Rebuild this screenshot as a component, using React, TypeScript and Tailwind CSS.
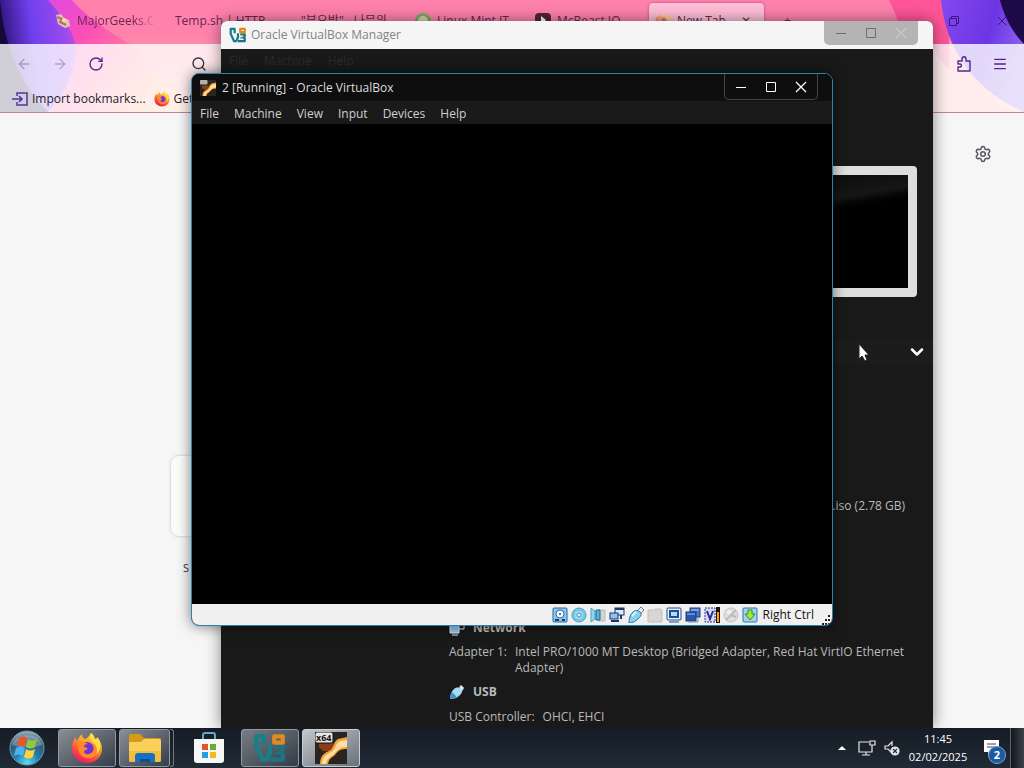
import { ReactNode, useId } from 'react'
import { ArrowLeft, ArrowRight, RotateCw, Search, Menu, Settings, ChevronDown } from 'lucide-react'

interface IChildren {
    children: ReactNode;
}

// ICONS: Applications
const FirefoxIcon = ({ className }: { className: string }) => {
    const id = useId();
    return (
        <svg viewBox="0 0 32 32" className={className} aria-hidden="true">
            <defs>
                <linearGradient id={id} x1="0.8" y1="0" x2="0.3" y2="1">
                    <stop offset="0" stopColor="#ffe14a" />
                    <stop offset="0.4" stopColor="#ff9a2b" />
                    <stop offset="0.7" stopColor="#ff4a3d" />
                    <stop offset="1" stopColor="#e31b6d" />
                </linearGradient>
            </defs>
            <path d="M20 1c2 2 3 4 3 6 2 0 3-1 3-2 3 3 5 8 5 12 0 8-7 14-15 14S1 25 1 17c0-5 1-9 4-12 0 2 0 3 1 4 1-3 3-5 5-7 0 3 1 4 3 5 3-1 4-3 6-6z" fill={`url(#${id})`} />
            <circle cx="16" cy="17" r="7" fill="#6d35d6" />
            <path d="M7 11c4-2 7-1 10 1-3 0-4 1-4 3 2 0 3 1 4 2-2 1-4 1-4 3 1 3 7 3 9-1 2-3 0-7-3-8 5 0 8 4 7 9-1 5-6 7-11 6-6-1-9-8-8-15z" fill="#ff8a2a" />
            <path d="M20 1c-2 4-1 6 2 9 4 4 5 8 3 13 5-5 6-11 2-17l-3 2c0-3-1-5-4-7z" fill="#ffdc45" />
        </svg>
    )
}

const VBoxIcon = ({ className }: { className: string }) => (
    <svg viewBox="0 0 32 28" className={className} aria-hidden="true" fill="none" strokeWidth="4">
        <path d="M10 11V3H3v9l6 13h4l3-7v-7" stroke="#16808a" strokeLinejoin="round" />
        <path d="M20 13h8v3l-2 2 2 2v5H16" stroke="#1c7480" strokeLinejoin="round" />
        <path d="M20 19h5" stroke="#1c7480" strokeWidth="2" />
        <path d="M20 3h8v6h-8z" stroke="#e08a22" strokeLinejoin="round" />
    </svg>
)

const MachineIcon = ({ className, label }: { className: string; label?: boolean }) => (
    <svg viewBox="0 0 32 32" className={className} aria-hidden="true">
        <path d="M0 0h32v32H0z" fill="#2c2421" />
        <path d="M4 11h14l3 4-5 4H8l-4-4z" fill="#8c3c16" />
        <path d="M5 32c0-8 4-11 9-13 5-2 4-9 9-12l9-2v12c-7 0-9 2-12 6-3 3-6 3-7 9z" fill="#f0a138" />
        <path d="M7 32c0-7 4-9 9-12 5-2 4-9 9-11l7-1v7c-7 0-9 3-12 6-3 4-8 4-9 11z" fill="#ffdca0" />
        {label ? (
            <>
                <rect width="18" height="11" rx="2" fill="#e6e6e6" stroke="#111" />
                <text x="1" y="9" fontSize="9" fontWeight="700" fontFamily="Open Sans, sans-serif" fill="#111">x64</text>
            </>
        ) : (
            <rect width="15" height="9" rx="2" fill="#b7b0a8" />
        )}
    </svg>
)

const ExplorerIcon = () => (
    <svg viewBox="0 0 34 30" className="h-[30px] w-[34px]" aria-hidden="true">
        <path d="M1 3c0-2 1-2 2-2h9l4 4h15c2 0 2 1 2 2v8H1z" fill="#d79a17" />
        <path d="M1 9h12l3-3h15c2 0 2 1 2 2v19c0 1-1 2-2 2H3c-1 0-2-1-2-2z" fill="#fbd05a" />
        <path d="M1 18h32v9c0 1-1 2-2 2H3c-1 0-2-1-2-2z" fill="#f2bf3c" />
        <path d="M7 29v-6c0-2 1-3 3-3h14c2 0 3 1 3 3v6h-5v-3H12v3z" fill="#1670c4" />
        <path d="M12 26h10v3H12z" fill="#0c4f96" />
    </svg>
)

const StoreIcon = () => (
    <svg viewBox="0 0 32 32" className="size-8" aria-hidden="true">
        <path d="M10 8V3c0-1 1-2 2-2h8c1 0 2 1 2 2v5" fill="none" stroke="#63a9c6" strokeWidth="2" />
        <path d="M1 7h30v21c0 2-1 3-3 3H4c-2 0-3-1-3-3z" fill="#f7f7f8" />
        <path d="M9 12h6v6H9z" fill="#e9502a" />
        <path d="M17 12h6v6h-6z" fill="#69b02b" />
        <path d="M9 20h6v6H9z" fill="#22a0e6" />
        <path d="M17 20h6v6h-6z" fill="#f8b91a" />
    </svg>
)

const StartOrb = () => (
    <svg viewBox="0 0 36 36" className="size-9" aria-hidden="true">
        <defs>
            <radialGradient id="orb" cx="0.5" cy="0.95" r="0.9">
                <stop offset="0" stopColor="#5fe0f5" />
                <stop offset="0.4" stopColor="#2080b4" />
                <stop offset="0.75" stopColor="#34566f" />
                <stop offset="1" stopColor="#8ea5b3" />
            </radialGradient>
        </defs>
        <circle cx="18" cy="18" r="17" fill="url(#orb)" stroke="#7597aa" />
        <path d="M3 15C6 3 29 1 33 15c-8 3-22 3-30 0z" fill="#fff" opacity="0.25" />
        <path d="M10 8c3-2 5-2 8 0l-2 9c-3-2-5-2-8 0z" fill="#e8552a" />
        <path d="M19 9c3 2 6 2 9 0l-2 8c-3 2-6 2-9 0z" fill="#95c93d" />
        <path d="M7 18c3-2 6-2 9 0l-2 8c-3-2-6-2-9 0z" fill="#4fb2f0" />
        <path d="M17 19c3 2 6 2 9 0l-2 8c-3 2-6 2-9 0z" fill="#ffd23c" />
    </svg>
)

// ICONS: Status bar of the machine window
const statusIcons: { name: string; drawing: ReactNode }[] = [
    { name: 'Hard disks', drawing: <><rect x="1" y="1" width="14" height="14" rx="1" fill="#8ec6ef" stroke="#2368ab" /><circle cx="8" cy="7" r="4" fill="#fff" stroke="#2368ab" /><circle cx="8" cy="7" r="1" fill="#123c6b" /><path d="M3 13h4M10 13h3" stroke="#123c6b" strokeWidth="2" /></> },
    { name: 'Optical drives', drawing: <><circle cx="8" cy="8" r="7" fill="#74c9ea" stroke="#4a9fc6" /><circle cx="8" cy="8" r="4" fill="#9fdcf2" /><circle cx="8" cy="8" r="2" fill="#e9fbff" stroke="#3f93bc" /></> },
    { name: 'Audio', drawing: <><path d="M8 3h7v11H8z" fill="#d3d3d3" stroke="#b9b9b9" /><path d="M1 1l4 3v8l-4 3z" fill="#8bd7ef" stroke="#4ba4c8" /><path d="M6 3h4v10H6z" fill="#56b4dd" stroke="#1d5f8d" /></> },
    { name: 'Network', drawing: <><rect x="6" y="1" width="9" height="7" fill="#dce9fa" stroke="#1f3768" /><path d="M6 2h9" stroke="#1f3768" strokeWidth="2" /><rect x="1" y="6" width="8" height="6" fill="#8fc4f2" stroke="#1f3768" /><path d="M2 14h8M12 8v4" stroke="#1f3768" strokeWidth="2" /></> },
    { name: 'USB', drawing: <><path d="M9 4l4-4 3 3-4 4z" fill="#e7edf2" stroke="#6b7c8c" /><path d="M5 5c2-2 5-2 7 0s1 4-1 6c-3 3-6 5-10 5 0-5 1-8 4-11z" fill="#86cfee" stroke="#27729f" /><path d="M4 9l4-4" stroke="#e4f7ff" strokeWidth="2" /></> },
    { name: 'Shared folders', drawing: <path d="M1 3h6l1-1h6v1h1v12H1z" fill="#dad5d5" stroke="#c2bebe" /> },
    { name: 'Display', drawing: <><rect x="1" y="1" width="14" height="12" rx="1" fill="#e8f2fb" stroke="#1e4a8a" /><rect x="4" y="4" width="8" height="6" fill="#b5dcf6" stroke="#1e4f9c" strokeWidth="2" /><path d="M3 15h10" stroke="#1e4a8a" /></> },
    { name: 'Recording', drawing: <><rect x="5" y="1" width="10" height="9" fill="#4a78c8" stroke="#1d3981" /><rect x="1" y="5" width="10" height="9" fill="#2c55ad" stroke="#1d3981" /><path d="M2 7h8M6 3h8" stroke="#a6c7f2" /><path d="M3 15h10v-4" stroke="#7d93bd" fill="none" /></> },
    { name: 'Processor', drawing: <><rect x="1" y="1" width="10" height="14" fill="#d8d9f6" stroke="#2e2c8d" strokeDasharray="2 1" /><path d="M3 4l3 8 3-8" fill="none" stroke="#2e2c8d" strokeWidth="2" /><path d="M12 0h4v16h-4z" fill="#191307" /><path d="M13 5h2v10h-2z" fill="#ffa018" /></> },
    { name: 'Mouse integration', drawing: <><circle cx="8" cy="8" r="7" fill="#e0dddd" stroke="#c5c1c1" /><path d="M3 13L13 3M8 8l5 2" stroke="#c0bcbc" strokeWidth="2" /><circle cx="6" cy="5" r="2" fill="#f3f3f3" /></> },
    { name: 'Keyboard', drawing: <><rect x="1" y="1" width="14" height="14" rx="1" fill="#9fd3ee" stroke="#2a78ad" /><path d="M6 3h4v4h3l-5 6-5-6h3z" fill="#a8ea3a" stroke="#2f8c2d" /></> },
];

const StatusIcon = ({ children, name }: IChildren & { name: string }) => (
    <svg viewBox="0 0 16 16" className="size-4 shrink-0" role="img" aria-label={name}>{children}</svg>
)

// COMPONENT: WALLPAPER behind the browser toolbars
const Aurora = () => (
    <div className="absolute inset-0 -z-10 overflow-hidden bg-linear-to-b from-[#ff82ad] from-30% to-[#ffb3a4]" aria-hidden="true">
        <svg viewBox="0 0 200 112" className="absolute top-0 left-0 h-28 w-[200px]">
            <defs>
                <linearGradient id="auroraLeft" x1="0" y1="0.2" x2="1" y2="0">
                    <stop offset="0" stopColor="#32147c" />
                    <stop offset="0.4" stopColor="#7040ee" />
                    <stop offset="0.8" stopColor="#9a48ee" />
                    <stop offset="1" stopColor="#c64fe3" />
                </linearGradient>
                <linearGradient id="auroraGlow" x1="0" y1="0" x2="1" y2="0.6">
                    <stop offset="0" stopColor="#d94be6" />
                    <stop offset="0.35" stopColor="#fb4fb8" />
                    <stop offset="0.65" stopColor="#ff7a9c" />
                    <stop offset="1" stopColor="#ffb27c" />
                </linearGradient>
            </defs>
            <path d="M40 0h32c14 16 34 30 58 44 24 22 44 44 60 68H50z" fill="url(#auroraGlow)" />
            <path d="M0 0h48c12 14 24 28 27 44 3 24-8 45-27 68H0z" fill="url(#auroraLeft)" />
            <path d="M0 0c4 40 16 80 48 112H0z" fill="#150b39" />
        </svg>
        <svg viewBox="0 0 200 112" className="absolute top-0 right-0 h-28 w-[200px]">
            <defs>
                <linearGradient id="auroraRight" x1="0" y1="0" x2="1" y2="0.4">
                    <stop offset="0" stopColor="#8448ef" />
                    <stop offset="0.6" stopColor="#6c35e4" />
                    <stop offset="1" stopColor="#8c63ef" />
                </linearGradient>
            </defs>
            <path d="M65 0h60v112H80C90 70 80 30 65 0z" fill="#ff5598" />
            <path d="M117 0h83v112C150 90 122 50 117 0z" fill="url(#auroraRight)" />
            <path d="M108 44c10 26 40 50 84 68H108z" fill="#ff9fa0" />
            <path d="M176 0h24v44c-12-12-20-28-24-44z" fill="#1c0b48" />
        </svg>
    </div>
)

// COMPONENT: BROWSER
const BrowserTab = ({ children, className, icon }: IChildren & { className: string; icon?: ReactNode }) => (
    <button type="button" className={`flex h-9 shrink-0 items-center gap-1.5 overflow-hidden rounded-t-[4px] text-left text-[12px] whitespace-nowrap ${className}`}>
        {icon}
        <span>{children}</span>
    </button>
)

const Browser = () => (
    <section className="flex h-full flex-col bg-[#f6f6f7]" aria-label="Browser">
        <header className="relative isolate border-b border-[#c3819f]">
            <Aurora />
            <nav className="flex h-11 items-center overflow-hidden pb-0.5 pl-[55px] text-[#68254e]" aria-label="Tabs">
                <BrowserTab className="w-[120px]" icon={<svg viewBox="0 0 16 16" className="size-4 shrink-0" aria-hidden="true"><path d="M1 2l5-1 3 4 5 2 1 6-5 2-7-4z" fill="#e3c3b0" /><path d="M2 4l5 2-2 3 6 3" stroke="#a07a5e" strokeWidth="2" fill="none" /><circle cx="9" cy="7" r="2" fill="#f5e0a0" /></svg>}>
                    <span className="bg-linear-to-r from-[#68254e] from-75% to-transparent bg-clip-text text-transparent">MajorGeeks.C</span>
                </BrowserTab>
                <BrowserTab className="w-[126px]">Temp.sh | HTTP</BrowserTab>
                <BrowserTab className="w-[114px] font-['Open_Sans','Noto_Sans_CJK_KR',sans-serif]">"부요방" - 나무위</BrowserTab>
                <BrowserTab className="w-[120px]" icon={<span className="size-4 shrink-0 rounded-full border-3 border-[#7eab62] bg-[#d5d5a5]" />}>Linux Mint IT</BrowserTab>
                <BrowserTab className="w-[114px]" icon={<svg viewBox="0 0 16 16" className="size-4 shrink-0" aria-hidden="true"><rect width="16" height="16" rx="4" fill="#57213e" /><path d="M6 3l5 4-5 5z" fill="#fff" /></svg>}>McBeast IQ</BrowserTab>
                <BrowserTab className="w-[115px] bg-[#ffbfd6] pl-1.5 shadow-[0_0_3px_#a7477b]" icon={<FirefoxIcon className="size-4 shrink-0 opacity-60" />}>New Tab <span className="pl-3">✕</span></BrowserTab>
                <BrowserTab className="w-10 pl-5">+</BrowserTab>
                <div className="ml-auto flex gap-9 pr-4 text-[#421679]">
                    <button type="button" aria-label="Restore">
                        <svg viewBox="0 0 12 12" className="size-3" fill="none" stroke="currentColor"><path d="M1.5 3.5h7v7h-7zM3.5 3V1.5h7v7H9" /></svg>
                    </button>
                    <button type="button" aria-label="Close">
                        <svg viewBox="0 0 12 12" className="size-3" fill="none" stroke="currentColor"><path d="M2 2l8 8M10 2l-8 8" /></svg>
                    </button>
                </div>
            </nav>
            <div className="bg-white/80">
                <div className="flex h-10 items-center gap-5 pr-4 pl-4 text-[#51288d]">
                    <button type="button" aria-label="Back" className="text-[#a99abf]"><ArrowLeft className="size-4" strokeWidth={2} /></button>
                    <button type="button" aria-label="Forward" className="text-[#b7a3cb]"><ArrowRight className="size-4" strokeWidth={2} /></button>
                    <button type="button" aria-label="Reload"><RotateCw className="size-4" strokeWidth={2} /></button>
                    <button type="button" aria-label="Search" className="ml-[67px] text-[#34323e]"><Search className="size-4" /></button>
                    <div className="ml-auto flex gap-5">
                        <button type="button" aria-label="Extensions">
                            <svg viewBox="0 0 16 16" className="size-4" fill="none" stroke="currentColor" strokeWidth="1.4" strokeLinejoin="round"><path d="M2 5h4V3c0-3 4-3 4 0v2h4v10H2v-4h2c2 0 2-3 0-3H2z" /></svg>
                        </button>
                        <button type="button" aria-label="Menu"><Menu className="size-4" strokeWidth={2} /></button>
                    </div>
                </div>
                <div className="flex h-7 items-center gap-2 pt-0.5 pl-3 text-[12px] text-[#231b2b]">
                    <a href="#import" className="flex items-center gap-1 whitespace-nowrap">
                        <svg viewBox="0 0 16 16" className="size-4 text-[#5033a5]" fill="none" stroke="currentColor" strokeWidth="1.5" aria-hidden="true"><path d="M5 5V2h10v12H5v-3M0 8h10M7 5l3 3-3 3" /></svg>
                        Import bookmarks...
                    </a>
                    <a href="#start" className="flex items-center gap-1 whitespace-nowrap"><FirefoxIcon className="size-4" />Get</a>
                </div>
            </div>
        </header>
        <main className="flex flex-1 flex-col">
            <button type="button" aria-label="Customise" className="mt-8 mr-8 self-end text-[#55555e]"><Settings className="size-[18px]" strokeWidth={2} /></button>
            <a href="#shortcut" className="mt-[293px] ml-[171px] flex w-20 flex-col gap-6 text-[11px] text-[#33333b]">
                <span className="h-20 rounded-lg bg-[#fbfbf7] shadow-[0_0_3px_#bbb]" />
                <span className="pl-3">S</span>
            </a>
        </main>
    </section>
)

// COMPONENT: WINDOW CONTROLS
const WindowControls = ({ className, closeClassName }: { className: string; closeClassName?: string }) => (
    <div className={`flex w-[94px] items-center justify-center gap-[18px] rounded-b-[5px] ${className}`}>
        <button type="button" aria-label="Minimize"><svg viewBox="0 0 12 12" className="size-3" stroke="currentColor"><path d="M1 6.5h10" /></svg></button>
        <button type="button" aria-label="Maximize"><svg viewBox="0 0 12 12" className="size-3" fill="none" stroke="currentColor"><path d="M1.5 1.5h9v9h-9z" /></svg></button>
        <button type="button" aria-label="Close" className={closeClassName}><svg viewBox="0 0 12 12" className="size-3" stroke="currentColor" strokeWidth="1.3"><path d="M1 1l10 10M11 1L1 11" /></svg></button>
    </div>
)

const UsbIcon = () => (
    <svg viewBox="0 0 16 16" className="size-4" aria-hidden="true">
        <path d="M10 4l2-3 3 3-2 3z" fill="#e7edf2" stroke="#8a9aa8" />
        <path d="M5 5c2-2 5-2 7 0s1 4-1 6c-3 3-6 4-10 4 0-4 1-7 4-10z" fill="#a4dcf7" />
        <path d="M1 15c0-3 1-5 2-7l5 5c-2 1-4 2-7 2z" fill="#3b95ce" />
    </svg>
)

// COMPONENT: VIRTUALBOX MANAGER
const Manager = () => (
    <section className="flex h-full flex-col overflow-hidden rounded-t-md bg-[#191919] text-[12px] text-[#b9b9b9] shadow-[0_0_16px_#0007]" aria-label="Oracle VirtualBox Manager">
        <header className="flex h-7 shrink-0 items-start justify-between bg-[#f5f5f5] pr-[15px] pl-2 text-[#838383]">
            <div className="flex h-7 items-center gap-1">
                <VBoxIcon className="h-4 w-[18px]" />
                <h1>Oracle VirtualBox Manager</h1>
            </div>
            <WindowControls className="h-6 bg-[#b4b4b4] text-[#6f6f6f]" closeClassName="text-[#c9c9c9]" />
        </header>
        <nav className="flex h-6 shrink-0 items-center gap-4 pl-2 text-[#2b2b2b]"><span>File</span><span>Machine</span><span>Help</span></nav>
        <div className="flex flex-1 flex-col pt-[93px]">
            <div className="mr-4 h-[131px] w-[180px] shrink-0 self-end rounded-[4px] border-9 border-[#dedede] bg-black bg-linear-170 from-[#080808] via-[#161616] via-28% to-black to-40%" />
            <div className="mt-[43px] flex h-6 shrink-0 items-center justify-end bg-[#1c1c1c] pr-1.5">
                <button type="button" aria-label="Details menu"><ChevronDown className="size-5 text-white" strokeWidth={3} /></button>
            </div>
            <p className="mt-[133px] pr-[28px] text-right">win8.1_support.iso (2.78 GB)</p>
            <div className="mt-[105px] ml-[228px] flex flex-col leading-4">
                <h2 className="flex items-center gap-2 font-bold"><svg viewBox="0 0 16 16" className="size-4" aria-hidden="true"><path d="M1 5h9v8H1z" fill="#8fc4f2" stroke="#dce9fa" /><path d="M8 2h7v7h-5" fill="none" stroke="#dce9fa" /><path d="M3 15h6" stroke="#dce9fa" /></svg>Network</h2>
                <dl className="mt-2 flex gap-2"><dt className="shrink-0">Adapter 1:</dt><dd className="w-[400px]">Intel PRO/1000 MT Desktop (Bridged Adapter, Red Hat VirtIO Ethernet Adapter)</dd></dl>
                <h2 className="mt-2 flex items-center gap-2 font-bold"><UsbIcon />USB</h2>
                <dl className="mt-[9px] flex gap-2"><dt>USB Controller:</dt><dd>OHCI, EHCI</dd></dl>
            </div>
        </div>
    </section>
)

// COMPONENT: RUNNING MACHINE
const menus = ['File', 'Machine', 'View', 'Input', 'Devices', 'Help'];

const MachineWindow = () => (
    <section className="flex flex-col overflow-hidden rounded-lg border border-[#2d7fb4] bg-black text-[12px] text-[#dcdcdc] shadow-[0_0_14px_#0008]" aria-label="2 [Running] - Oracle VirtualBox">
        <header className="flex h-[27px] items-start justify-between bg-[#0e0e0e] pr-3.5 pl-2">
            <div className="flex h-[27px] items-center gap-1.5">
                <MachineIcon className="size-4" />
                <h1>2 [Running] - Oracle VirtualBox</h1>
            </div>
            <WindowControls className="h-[26px] border border-t-0 border-[#444744] text-white" />
        </header>
        <nav className="flex h-[23px] items-center gap-[15px] bg-[#1a1a1a] pt-0.5 pl-2 text-[#d0d0d0]" aria-label="Machine menu">
            {menus.map((item) => (
                <button type="button" key={item}>{item}</button>
            ))}
        </nav>
        <div className="h-[480px] w-[640px] bg-black" />
        <footer className="flex h-[21px] items-center justify-end gap-[3px] bg-[#f0f0f0] pr-px text-[#161616]">
            {statusIcons.map((icon) => (
                <StatusIcon key={icon.name} name={icon.name}>{icon.drawing}</StatusIcon>
            ))}
            <span className="pt-px pl-0.5 whitespace-nowrap">Right Ctrl</span>
            <svg viewBox="0 0 10 10" className="ml-1 size-2.5 self-end" fill="#252525" aria-hidden="true"><path d="M7 0h2v2H7zM7 4h2v2H7zM7 8h2v2H7zM4 4h2v2H4zM4 8h2v2H4zM1 8h2v2H1z" /></svg>
        </footer>
    </section>
)

// COMPONENT: TASKBAR
const TaskButton = ({ children, label, className }: IChildren & { label: string; className: string }) => (
    <button type="button" aria-label={label} className={`flex h-[38px] items-center justify-center rounded-[3px] ${className}`}>{children}</button>
)

const Taskbar = () => (
    <footer className="flex h-10 shrink-0 items-center bg-[#1b232d] bg-linear-to-b from-[#151c25] to-[#202a36] pl-[9px] text-[11px] text-white">
        <button type="button" aria-label="Start"><StartOrb /></button>
        <TaskButton label="Firefox" className="ml-[13px] w-[58px] border border-[#9299a1] bg-linear-to-br from-[#8b8f96] to-[#363e49]"><FirefoxIcon className="size-8" /></TaskButton>
        <TaskButton label="File Explorer" className="ml-[3px] w-[51px] border border-[#9299a1] bg-linear-to-br from-[#8b8f96] to-[#363e49]"><ExplorerIcon /></TaskButton>
        <span className="h-[38px] w-1 rounded-r-[3px] border border-l-0 border-[#6f7780]" />
        <TaskButton label="Microsoft Store" className="ml-1 w-[62px]"><StoreIcon /></TaskButton>
        <TaskButton label="Oracle VirtualBox Manager" className="ml-px w-[58px] border border-[#9299a1] bg-linear-to-br from-[#777d85] to-[#343d48]"><VBoxIcon className="h-[30px] w-[34px]" /></TaskButton>
        <TaskButton label="Virtual machine 2" className="ml-[3px] w-[58px] border border-[#c9cdd2] bg-linear-to-br from-[#c3c7cb] to-[#69717a]"><MachineIcon className="size-8" label /></TaskButton>
        <div className="ml-auto flex h-full items-center">
            <button type="button" aria-label="Show hidden icons" className="mr-3">
                <svg viewBox="0 0 8 4" className="h-1 w-2" fill="#fff"><path d="M0 4l4-4 4 4z" /></svg>
            </button>
            <button type="button" aria-label="Network">
                <svg viewBox="0 0 18 18" className="size-[18px]" fill="none" stroke="#e8e8e8" strokeWidth="1.2"><path d="M11 3H1v10h13V9M4 16h8M8 13v3M12 2h5v4h-5zM14 6v3" /></svg>
            </button>
            <button type="button" aria-label="Sound muted" className="ml-2">
                <svg viewBox="0 0 16 16" className="size-4" fill="none" stroke="#e8e8e8" strokeWidth="1.2"><path d="M8 13L4 9H1V6h3l4-4v4" /><circle cx="11" cy="11" r="4" fill="#e8e8e8" /><path d="M9 9l4 4M13 9l-4 4" stroke="#26303c" /></svg>
            </button>
            <time className="ml-2 flex w-[60px] flex-col items-center leading-[18px] whitespace-nowrap"><span>11:45</span><span>02/02/2025</span></time>
            <button type="button" aria-label="2 notifications" className="relative ml-3.5 h-6 w-[26px]">
                <svg viewBox="0 0 26 24" className="h-6 w-[26px]"><path d="M2 4h15v12H9l-3 3v-3H2z" fill="#fff" /><path d="M5 8h9M5 11h9" stroke="#3a4350" /></svg>
                <span className="absolute right-0.5 -bottom-1 flex size-[18px] items-center justify-center rounded-full border border-[#7ea3cf] bg-[#1c5a9f] text-[11px] font-bold">2</span>
            </button>
            <button type="button" aria-label="Show desktop" className="ml-0.5 h-full w-3.5 border-l border-[#5d646c] bg-linear-to-r from-[#12171d] to-[#3b434c]" />
        </div>
    </footer>
)

const App = () => {
    return (
        <div className="flex h-screen flex-col overflow-hidden font-['Open_Sans','Noto_Sans',sans-serif]">
            <div className="relative isolate flex-1 overflow-hidden">
                <div className="absolute inset-0"><Browser /></div>
                <div className="absolute top-[21px] right-[91px] bottom-0 left-[221px]"><Manager /></div>
                <div className="absolute top-[73px] left-[191px]"><MachineWindow /></div>
                <svg viewBox="0 0 12 19" className="absolute top-[343px] left-[858px] h-[19px] w-3" aria-hidden="true"><path d="M1 1v15l3-3 3 5 2-1-2-5h4z" fill="#fff" stroke="#222" /></svg>
            </div>
            <Taskbar />
        </div>
    )
}

export default App
